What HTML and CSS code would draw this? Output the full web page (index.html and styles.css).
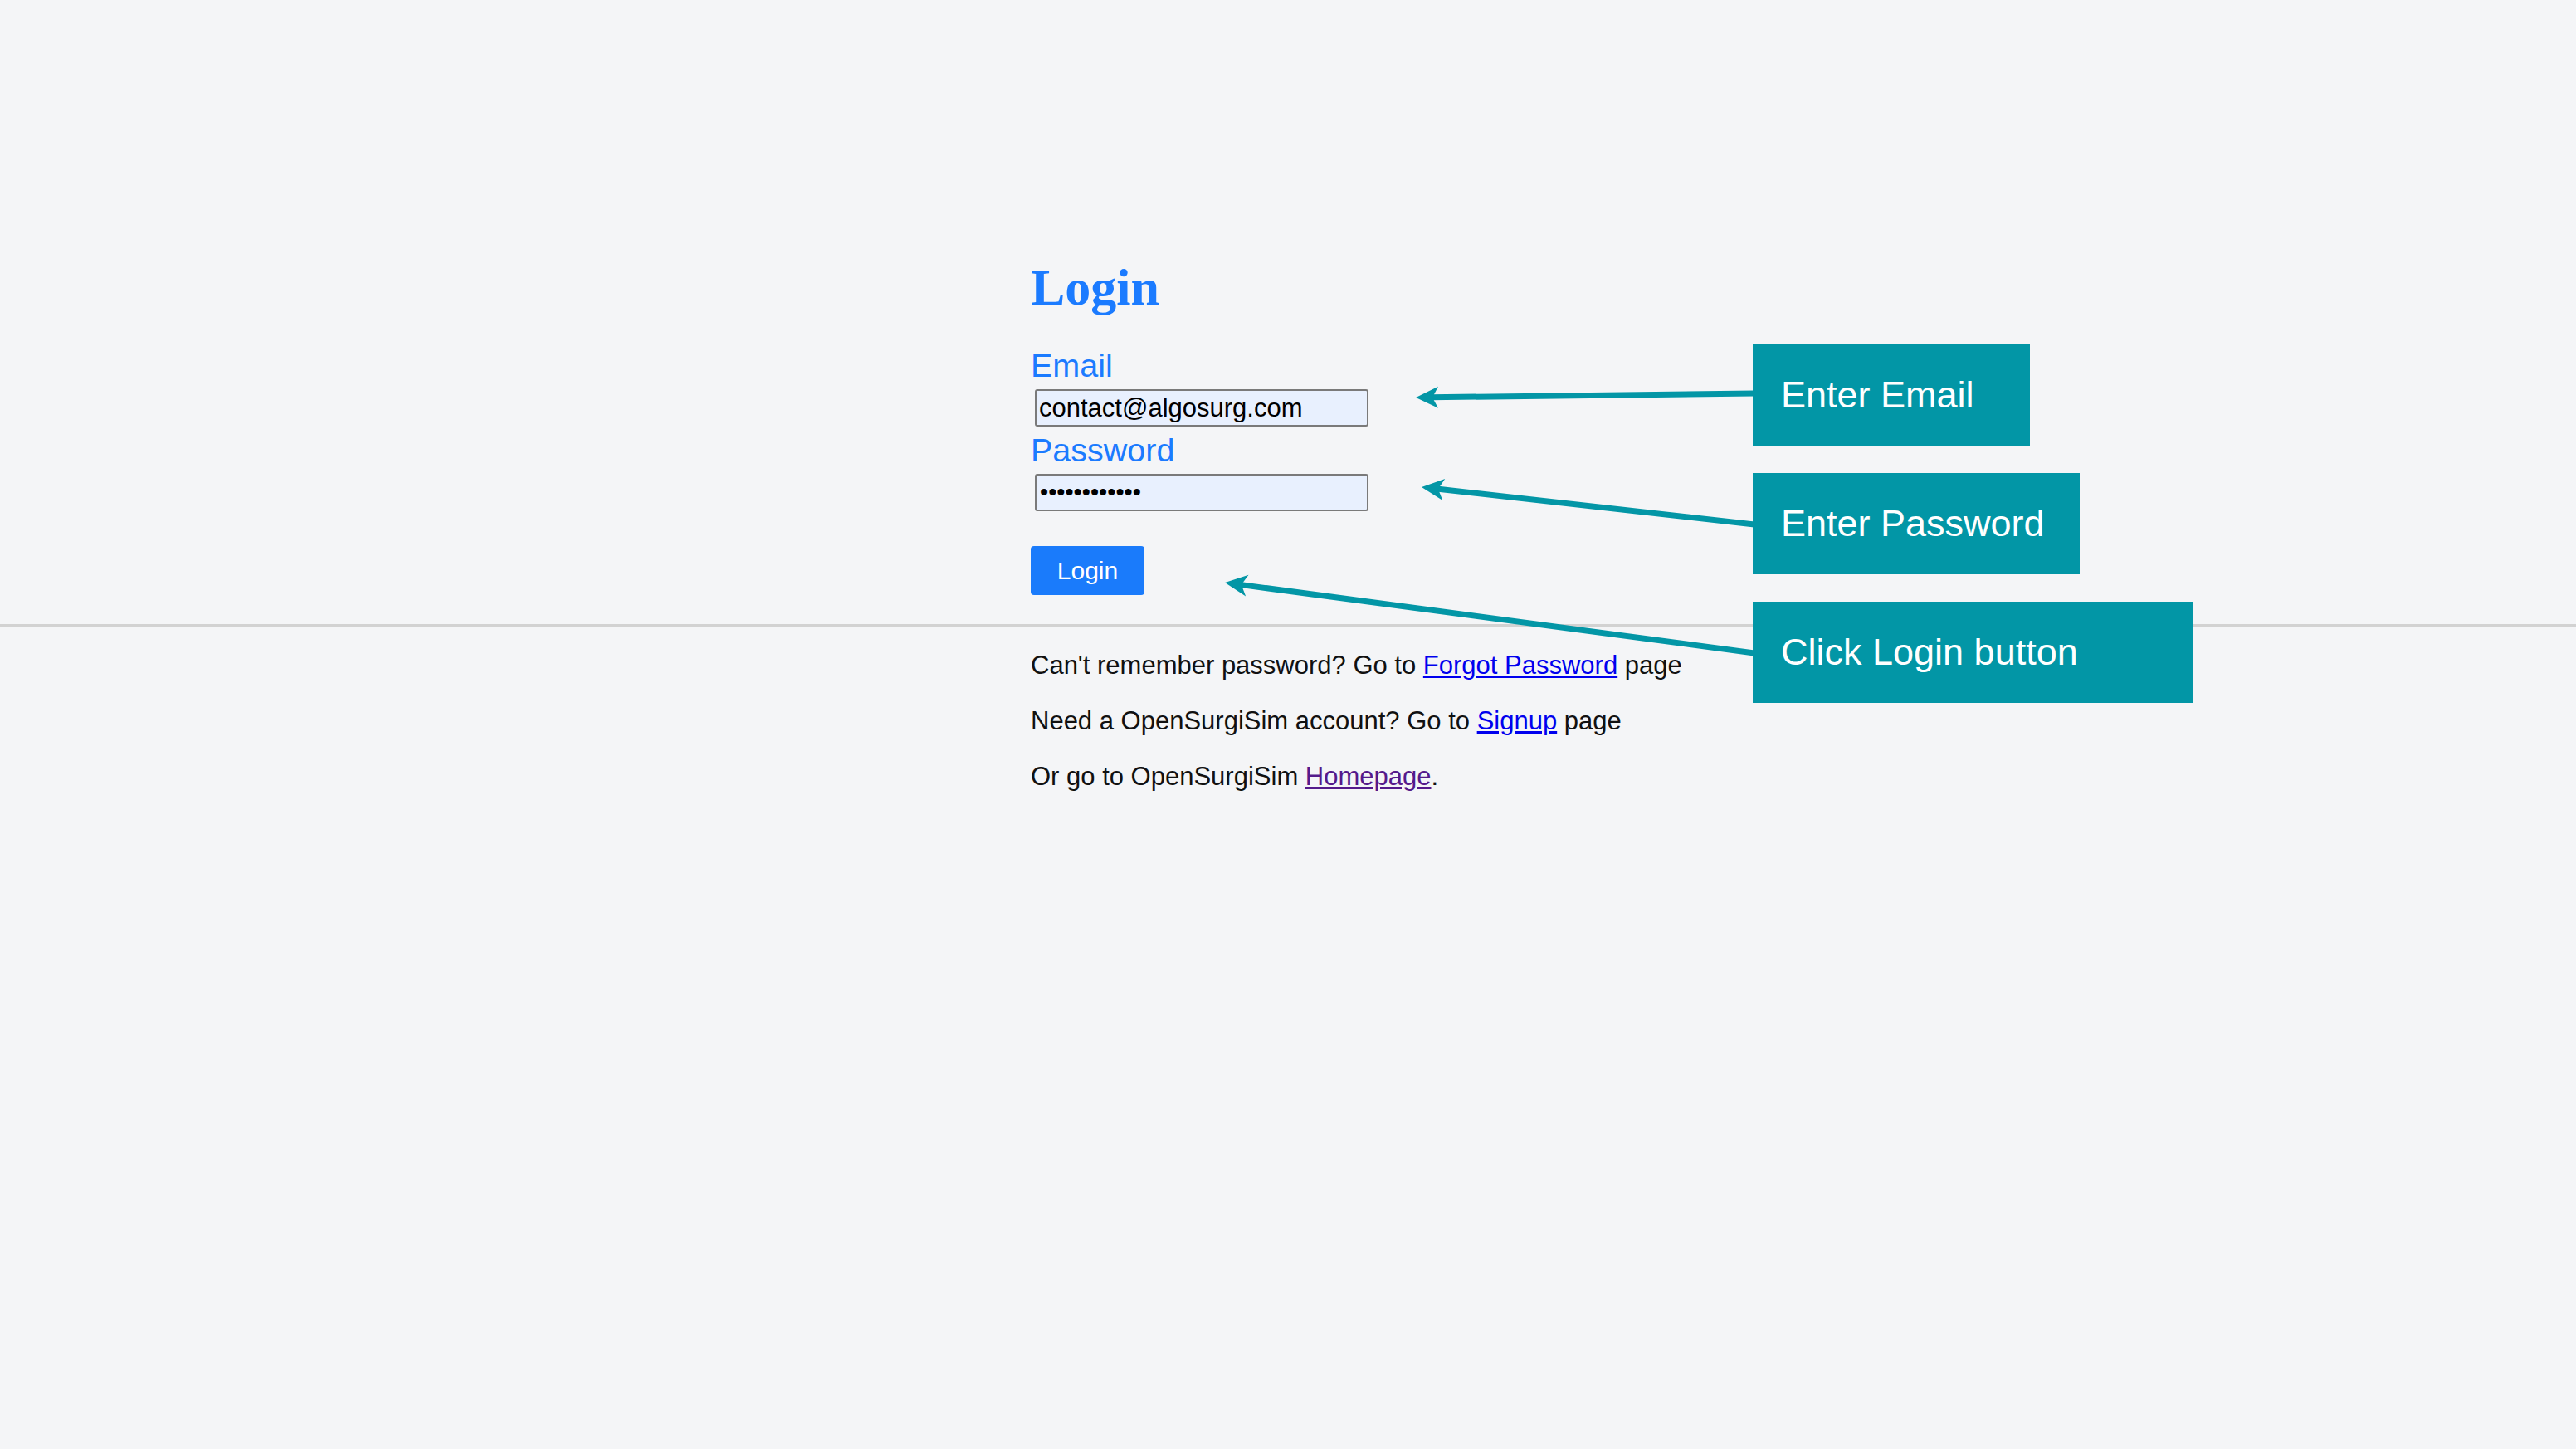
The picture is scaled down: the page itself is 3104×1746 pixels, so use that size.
FILE: index.html
```html
<!DOCTYPE html>
<html lang="en">
<head>
<meta charset="utf-8">
<title>Login</title>
<link rel="stylesheet" href="styles.css">
</head>
<body>
  <main class="page">
    <section class="login">
      <h1 class="login-title">Login</h1>
      <form class="login-form">
        <label class="field-label" for="email">Email</label>
        <input class="field-input" id="email" type="text" value="contact@algosurg.com">
        <label class="field-label" for="password">Password</label>
        <input class="field-input field-password" id="password" type="password" value="password1234">
        <button class="login-btn" type="button">Login</button>
      </form>
    </section>
    <hr class="divider">
    <section class="links">
      <p class="link-line">Can't remember password? Go to <a class="link" href="#">Forgot Password</a> page</p>
      <p class="link-line">Need a OpenSurgiSim account? Go to <a class="link" href="#">Signup</a> page</p>
      <p class="link-line">Or go to OpenSurgiSim <a class="link visited" href="#">Homepage</a>.</p>
    </section>
  </main>

  <div class="annotations">
    <svg class="arrows" width="3104" height="1746" viewBox="0 0 3104 1746" xmlns="http://www.w3.org/2000/svg">
      <g stroke="#0396a6" stroke-width="7" fill="none">
        <line x1="1724" y1="478.8" x2="2114" y2="474"/>
        <line x1="1731" y1="589" x2="2114" y2="632"/>
        <line x1="1494" y1="704.4" x2="2114" y2="787"/>
      </g>
      <g fill="#0396a6">
        <polygon points="1706,479 1733,465.7 1726,478.9 1733,491.7"/>
        <polygon points="1713,587 1741.2,577.1 1732.9,589.2 1738.4,602.9"/>
        <polygon points="1476,702 1504.5,692.7 1495.8,704.6 1501.1,718.5"/>
      </g>
    </svg>
    <div class="note note-email">Enter Email</div>
    <div class="note note-password">Enter Password</div>
    <div class="note note-login">Click Login button</div>
  </div>
</body>
</html>
```

FILE: styles.css
```css
html, body {
  margin: 0;
  padding: 0;
}

body {
  background: #f4f5f7;
  font-family: "Liberation Sans", Arial, sans-serif;
  color: #111;
  width: 3104px;
  height: 1746px;
  overflow: hidden;
  position: relative;
}

.page {
  display: flex;
  flex-direction: column;
}

.login {
  padding: 310px 0 0 1242px;
}

.login-title {
  margin: 0;
  font-family: "Liberation Serif", "Times New Roman", serif;
  font-weight: bold;
  font-size: 62px;
  line-height: 72px;
  color: #1b7bff;
}

.login-form {
  display: flex;
  flex-direction: column;
  align-items: flex-start;
  margin-top: 36px;
}

.field-label {
  font-size: 39.5px;
  line-height: 45px;
  color: #1b7bff;
  margin-bottom: 6px;
}

.field-input {
  box-sizing: border-box;
  width: 402px;
  height: 45px;
  margin: 0 0 6px 5px;
  padding: 0 3px;
  border: 2px solid #7a7a7a;
  border-radius: 3px;
  background: #e8f0fe;
  font-family: "Liberation Sans", Arial, sans-serif;
  font-size: 31px;
  color: #000;
  outline: none;
}

.field-password {
  font-size: 29px;
  padding-left: 4px;
}

.login-btn {
  margin-top: 36px;
  box-sizing: border-box;
  width: 137px;
  height: 59px;
  padding: 12px 0;
  border: none;
  border-radius: 4px;
  background: #1a7bfb;
  color: #fff;
  font-family: "Liberation Sans", Arial, sans-serif;
  font-size: 30px;
  line-height: 35px;
  cursor: pointer;
}

.divider {
  margin: 35px 0 0;
  border: none;
  border-top: 3px solid #d2d2d2;
  height: 0;
}

.links {
  padding: 29px 0 0 1242px;
  display: flex;
  flex-direction: column;
  gap: 31px;
}

.link-line {
  margin: 0;
  font-size: 31px;
  line-height: 36px;
}

.link {
  color: #0000ee;
  text-decoration: underline;
}

.link.visited {
  color: #551a8b;
}

.annotations {
  position: absolute;
  left: 0;
  top: 0;
  width: 3104px;
  height: 1746px;
  pointer-events: none;
}

.arrows {
  position: absolute;
  left: 0;
  top: 0;
}

.note {
  position: absolute;
  left: 2112px;
  height: 122px;
  box-sizing: border-box;
  padding-left: 34px;
  display: flex;
  align-items: center;
  background: #0296a6;
  color: #fff;
  font-size: 45px;
  line-height: 52px;
}

.note-email {
  top: 415px;
  width: 334px;
}

.note-password {
  top: 570px;
  width: 394px;
}

.note-login {
  top: 725px;
  width: 530px;
}
```
